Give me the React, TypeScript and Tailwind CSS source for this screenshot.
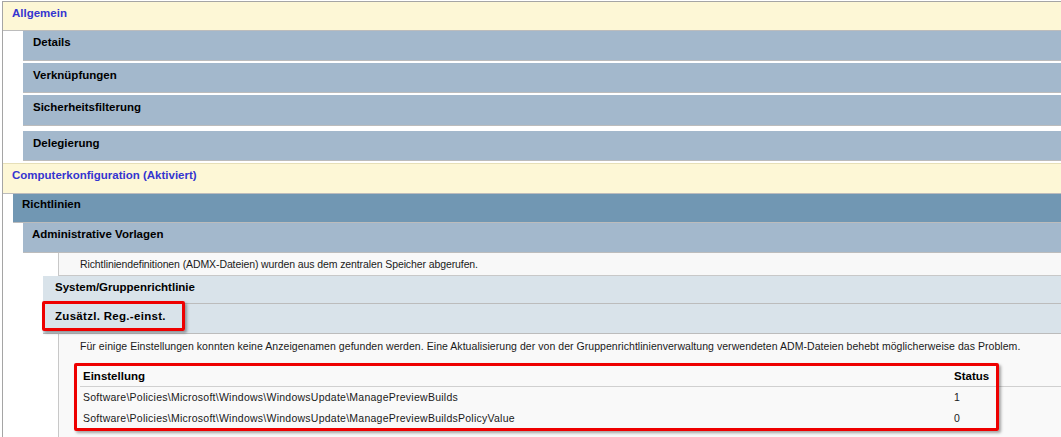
import React from "react";

const Head = ({
  children,
  className,
}: {
  children: React.ReactNode;
  className: string;
}) => (
  <div className={`border-b border-[#bcbcbc] font-bold text-black leading-[14px] ${className}`}>
    {children}
  </div>
);

export default function App() {
  return (
    <div className="w-[1061px] h-[437px] overflow-hidden bg-white font-['Liberation_Sans',Arial,sans-serif] text-[11.5px]">
      <div className="ml-[2px] mt-[1px] min-h-[436px] border-l border-t border-[#a5a5a5]">
        {/* Allgemein */}
        <Head className="h-[29px] bg-[#fdf7d6] pl-[9px] pt-[4px] !text-[#3535d0]">Allgemein</Head>
        <div className="ml-[20px]">
          <Head className="h-[30px] bg-[#a3b8cc] pl-[10px] pt-[4px]">Details</Head>
          <Head className="mt-[2px] h-[30px] bg-[#a3b8cc] pl-[10px] pt-[5px]">Verknüpfungen</Head>
          <Head className="mt-[2px] h-[31px] bg-[#a3b8cc] pl-[10px] pt-[5px]">Sicherheitsfilterung</Head>
          <Head className="mt-[5px] h-[30px] bg-[#a3b8cc] pl-[10px] pt-[5px]">Delegierung</Head>
        </div>

        {/* Computerkonfiguration */}
        <Head className="mt-[2px] h-[31px] border-t border-t-[#e6dfb8] bg-[#fdf7d6] pl-[9px] pt-[4px] !text-[#3535d0]">
          Computerkonfiguration (Aktiviert)
        </Head>
        <div className="ml-[10px]">
          <Head className="h-[29px] bg-[#7197b3] pl-[9px] pt-[3px]">Richtlinien</Head>
          <div className="ml-[10px]">
            <Head className="h-[30px] bg-[#a3b8cc] pl-[9px] pt-[4px]">Administrative Vorlagen</Head>
            <div className="ml-[20px]">
              <div className="ml-[15px] h-[23px] whitespace-nowrap border-b border-l border-[#c8c8c8] bg-[#f8f8f8] pl-[21px] pt-[4px] text-[10.5px] leading-[14px] tracking-[-0.1px] text-[#1a1a1a]">
                Richtliniendefinitionen (ADMX-Dateien) wurden aus dem zentralen Speicher abgerufen.
              </div>
              <Head className="h-[28px] bg-[#d9e3ea] pl-[12px] pt-[4px]">System/Gruppenrichtlinie</Head>
              <div className="relative">
                <Head className="h-[30px] bg-[#d9e3ea] pl-[12px] pt-[5px] tracking-[0.3px]">Zusätzl. Reg.-einst.</Head>
                <div className="pointer-events-none absolute left-[-1px] top-[-3px] h-[30px] w-[143px] rounded-[2px] border-[3px] border-[#ee0000] shadow-[2px_2px_3px_rgba(0,0,0,0.35)]" />
              </div>
              <div className="ml-[15px] min-h-[120px] border-l border-[#c8c8c8] bg-[#f9f9f9] pl-[21px] pt-[5px] text-[10.5px] text-[#1a1a1a]">
                <div className="whitespace-nowrap leading-[14px] tracking-[0.05px]">
                  Für einige Einstellungen konnten keine Anzeigenamen gefunden werden. Eine Aktualisierung der von der
                  Gruppenrichtlinienverwaltung verwendeten ADM-Dateien behebt möglicherweise das Problem.
                </div>
                <div className="relative mt-[12px]">
                  <div className="grid h-[22px] grid-cols-[874px_1fr] border-b border-[#d0d0d0] text-[11.5px] font-bold leading-[22px] text-black">
                    <div className="pl-[3px]">Einstellung</div>
                    <div>Status</div>
                  </div>
                  {[
                    ["Software\\Policies\\Microsoft\\Windows\\WindowsUpdate\\ManagePreviewBuilds", "1"],
                    ["Software\\Policies\\Microsoft\\Windows\\WindowsUpdate\\ManagePreviewBuildsPolicyValue", "0"],
                  ].map(([k, v]) => (
                    <div key={k} className="grid h-[21px] grid-cols-[874px_1fr] whitespace-nowrap leading-[21px]">
                      <div className="pl-[3px] tracking-[0.25px]">{k}</div>
                      <div>{v}</div>
                    </div>
                  ))}
                  <div className="pointer-events-none absolute left-[-6px] top-[-2px] h-[68px] w-[925px] rounded-[2px] border-[3px] border-[#ee0000] shadow-[2px_2px_3px_rgba(0,0,0,0.35)]" />
                </div>
              </div>
            </div>
          </div>
        </div>
      </div>
    </div>
  );
}
